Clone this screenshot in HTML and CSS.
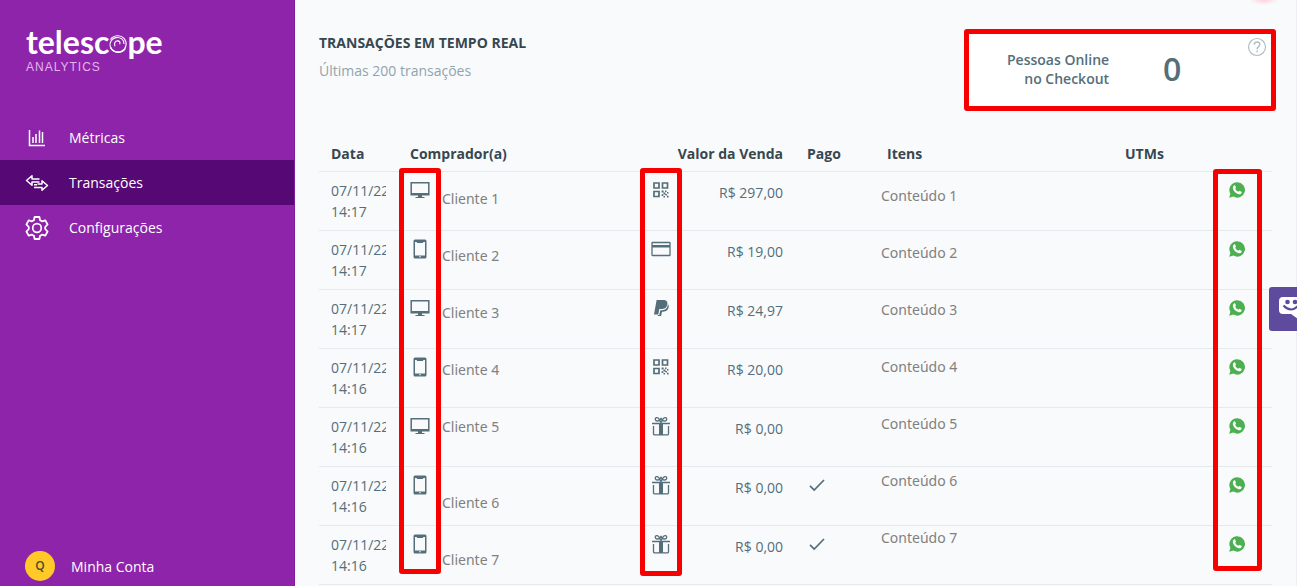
FILE: index.html
```html
<!DOCTYPE html>
<html lang="pt-BR">
<head>
<meta charset="utf-8">
<title>Telescope Analytics - Transações</title>
<meta name="viewport" content="width=device-width, initial-scale=1">
<link rel="stylesheet" href="styles.css">
</head>
<body>
<svg class="sprite" aria-hidden="true">
  <symbol id="desktop" viewBox="0 0 20 20"><path fill="none" stroke="currentColor" stroke-width="1.500" d="M1.200 2.700h17.600v12H1.200z"/><path fill="currentColor" d="M1 13h18v2H1zM8 15h4v2h2.500v1h-9v-1H8z"/></symbol>
  <symbol id="mobile" viewBox="0 0 20 20"><path fill="currentColor" fill-rule="evenodd" d="M5 .5h10q1.500 0 1.500 1.500v16q0 1.500-1.500 1.500H5q-1.500 0-1.500-1.500V2Q3.500.5 5 .5zM5 3v13.500h10V3h-1.500l-.8 1H7.300l-.8-1zM9.200 17.300v1h1.600v-1z"/></symbol>
  <symbol id="qr" viewBox="0 0 20 20"><path fill="none" stroke="currentColor" stroke-width="1.700" d="M3 3h5v5H3zM11.500 3h5v5h-5zM3 11.500h5v5H3z"/><path fill="currentColor" d="M10.600 10.600h2v2h-2zM14 10.600h1.500v1.500H14zM16 12h1.500v1.500H16zM12.500 12.500h2v2h-2zM10.600 14.300h1.700V16h-1.700zM14.500 14h1.500v1.500h-1.500zM12.500 16H14v1.500h-1.500zM16 15.800h1.600v1.600H16z"/></symbol>
  <symbol id="card" viewBox="0 0 20 20"><rect x="1" y="3.500" width="18" height="13" rx=".6" fill="none" stroke="currentColor" stroke-width="1.300"/><path fill="currentColor" d="M1 6h18v2.500H1z"/></symbol>
  <symbol id="paypal" viewBox="0 0 20 20"><path fill="currentColor" d="M5.600 2h6.600c3.200 0 4.700 1.600 4.100 4.500-.6 3-2.600 4.600-5.800 4.600H8.300l-1 5.400H3z"/><path fill="currentColor" d="M17 6.300c.8.9.9 2 .6 3.300-.6 2.800-2.400 4.100-5.200 4.100H11l-.9 4.300H6.800l.2-.9h1.300l1-4.900h2c3.200 0 5.100-2.100 5.700-5.900z"/></symbol>
  <symbol id="gift" viewBox="0 0 20 20"><g fill="none" stroke="currentColor" stroke-width="1.300"><path d="M1 7.500h18M2.500 10v8q0 .8.8.8h13.400q.8 0 .8-.8v-8"/><path d="M10 6.500C8.500 3 7 1.300 5.500 1.600 3.500 2 4 5 6 5c2 0 3.500-1 4-3.200.5 2.200 2 3.200 4 3.200 2 0 2.500-3 .5-3.400C13 1.300 11.500 3 10 6.500z"/></g><path fill="currentColor" d="M8 7h4v12H8z"/></symbol>
  <symbol id="check" viewBox="0 0 20 20"><path fill="none" stroke="currentColor" stroke-width="1.700" d="M3 10.800l4.200 4.200L17 5"/></symbol>
  <symbol id="whatsapp" viewBox="0 0 18 18"><path fill="#4caf50" d="M9.200 1.200a7.700 7.700 0 1 1-3.700 14.400L1.200 16.800l1.200-4.100A7.700 7.700 0 0 1 9.200 1.200z"/><path fill="#fff" d="M6 4.600c.4-.4 1-.4 1.200.1l.7 1.600c.2.5-.2.900-.7 1.400.8 1.600 1.800 2.500 3.300 3.100.6-.8.900-1.100 1.300-.9l1.600.8c.4.2.4.5.2 1-.5 1.300-1.600 1.800-2.900 1.500C7.500 12.400 5.400 10.200 4.900 7.600 4.700 6.400 5.200 5.300 6 4.600z"/></symbol>
</svg>

<div class="app">
  <aside class="sidebar">
    <a class="logo" href="#" aria-label="Telescope Analytics">
      <span class="logo-name"><span>telesc</span><svg class="logo-o" viewBox="0 0 20 20"><path fill="none" stroke="#fff" stroke-width="1.100" d="M2.500 5.500C5.500 1 12.500.5 16 4.300c3.600 4 2.500 10.500-2.300 12.900-4.600 2.200-10.200.1-11.500-4.800C1.200 8 4 4.300 8 3.600c4.500-.8 8.300 2.200 8 6.400"/><path fill="none" stroke="#fff" stroke-width="1.600" d="M2.600 13.500c2.600 5.500 10.600 6.500 14.600 1"/><path fill="none" stroke="#fff" stroke-width="1.100" d="M7 12.300c-1.200-2.800 0-5.300 2.600-5.500 2.200 0 3.200 2 1.900 3.400M9.500 6.800l2.500 1.200"/></svg><span>pe</span></span>
      <span class="logo-sub">ANALYTICS</span>
    </a>
    <nav class="menu">
      <a href="#"><svg class="menu-icon" viewBox="0 0 24 24"><path d="M4.500 4v15.500H20M8 17v-6M11 17V8M14.500 17V4.500M17.500 17V6" stroke-width="1.500"/></svg>Métricas</a>
      <a href="#" class="active" aria-current="page"><svg class="menu-icon" viewBox="0 0 24 24"><path d="M14.500 8H7V4.800L1.500 9.500 7 14.200V11h7.500M9 16.500h8v2.700l5.500-4.700L17 9.800V13h-4.500M9 13.800h3" stroke-width="1.500" stroke-linejoin="round"/></svg>Transações</a>
      <a href="#"><svg class="menu-icon" viewBox="0 0 24 24"><circle cx="12" cy="12" r="4.300" stroke-width="1.700"/><path d="M9.600 1h4.800l.7 3.200 1.900 1.100 3.200-1 2.400 4.100L20.200 11v2l2.400 2.600-2.400 4.100-3.200-1-1.900 1.100-.7 3.200H9.600l-.7-3.200L7 18.700l-3.200 1-2.400-4.100L3.800 13v-2L1.400 8.400l2.400-4.100 3.200 1 1.900-1.100z" stroke-width="1.800" stroke-linejoin="round"/></svg>Configurações</a>
    </nav>
    <a class="account" href="#"><span class="avatar">Q</span>Minha Conta</a>
  </aside>

  <main class="main">
    <header class="page-head">
      <div>
        <h1>TRANSAÇÕES EM TEMPO REAL</h1>
        <p class="subtitle">Últimas 200 transações</p>
      </div>
      <section class="stat">
        <p class="stat-label">Pessoas Online<br>no Checkout</p>
        <strong class="stat-value">0</strong>
        <button class="help" type="button" aria-label="Ajuda"><svg viewBox="0 0 20 20"><circle cx="10" cy="10" r="8.500" stroke-width="1.200"/><path d="M7.300 7.700c0-3.600 5.600-3.500 5.500-.2 0 2.200-2.700 2.100-2.700 4.700M10.100 13.600v1.700" stroke-width="1.500"/></svg></button>
      </section>
    </header>

    <div class="table-area">
      <table>
        <colgroup><col class="c-date"><col class="c-device"><col class="c-buyer"><col class="c-method"><col class="c-value"><col class="c-paid"><col><col class="c-utm"><col class="c-contact"></colgroup>
        <thead>
          <tr><th>Data</th><th colspan="2">Comprador(a)</th><th colspan="2" class="num">Valor da Venda</th><th>Pago</th><th>Itens</th><th>UTMs</th><th></th></tr>
        </thead>
        <tbody>
          <tr><td><div class="date">07/11/22 14:17</div></td><td><svg class="icon"><use href="#desktop"/></svg></td><td></td><td><svg class="icon"><use href="#qr"/></svg></td><td class="num">R$ 297,00</td><td></td><td></td><td></td><td class="contact"><a href="#" aria-label="WhatsApp"><svg><use href="#whatsapp"/></svg></a></td></tr>
          <tr><td><div class="date">07/11/22 14:17</div></td><td><svg class="icon"><use href="#mobile"/></svg></td><td></td><td><svg class="icon"><use href="#card"/></svg></td><td class="num">R$ 19,00</td><td></td><td></td><td></td><td class="contact"><a href="#" aria-label="WhatsApp"><svg><use href="#whatsapp"/></svg></a></td></tr>
          <tr><td><div class="date">07/11/22 14:17</div></td><td><svg class="icon"><use href="#desktop"/></svg></td><td></td><td><svg class="icon"><use href="#paypal"/></svg></td><td class="num">R$ 24,97</td><td></td><td></td><td></td><td class="contact"><a href="#" aria-label="WhatsApp"><svg><use href="#whatsapp"/></svg></a></td></tr>
          <tr><td><div class="date">07/11/22 14:16</div></td><td><svg class="icon"><use href="#mobile"/></svg></td><td></td><td><svg class="icon"><use href="#qr"/></svg></td><td class="num">R$ 20,00</td><td></td><td></td><td></td><td class="contact"><a href="#" aria-label="WhatsApp"><svg><use href="#whatsapp"/></svg></a></td></tr>
          <tr><td><div class="date">07/11/22 14:16</div></td><td><svg class="icon"><use href="#desktop"/></svg></td><td></td><td><svg class="icon"><use href="#gift"/></svg></td><td class="num">R$ 0,00</td><td></td><td></td><td></td><td class="contact"><a href="#" aria-label="WhatsApp"><svg><use href="#whatsapp"/></svg></a></td></tr>
          <tr><td><div class="date">07/11/22 14:16</div></td><td><svg class="icon"><use href="#mobile"/></svg></td><td></td><td><svg class="icon"><use href="#gift"/></svg></td><td class="num">R$ 0,00</td><td><svg class="icon"><use href="#check"/></svg></td><td></td><td></td><td class="contact"><a href="#" aria-label="WhatsApp"><svg><use href="#whatsapp"/></svg></a></td></tr>
          <tr><td><div class="date">07/11/22 14:16</div></td><td><svg class="icon"><use href="#mobile"/></svg></td><td></td><td><svg class="icon"><use href="#gift"/></svg></td><td class="num">R$ 0,00</td><td><svg class="icon"><use href="#check"/></svg></td><td></td><td></td><td class="contact"><a href="#" aria-label="WhatsApp"><svg><use href="#whatsapp"/></svg></a></td></tr>
        </tbody>
      </table>

      <!-- Annotation layer: labels and highlight frames over the table -->
      <ul class="notes notes-buyers"><li>Cliente 1</li><li>Cliente 2</li><li>Cliente 3</li><li>Cliente 4</li><li>Cliente 5</li><li class="after-break">Cliente 6</li><li>Cliente 7</li></ul>
      <ul class="notes notes-items"><li>Conteúdo 1</li><li>Conteúdo 2</li><li>Conteúdo 3</li><li>Conteúdo 4</li><li>Conteúdo 5</li><li>Conteúdo 6</li><li>Conteúdo 7</li></ul>
      <div class="frame frame-device"></div>
      <div class="frame frame-method"></div>
      <div class="frame frame-contact"></div>
    </div>
  </main>
</div>
<div class="glow"></div>
<button class="chat" type="button" aria-label="Chat"><svg viewBox="0 0 28 26"><path fill="#fff" d="M4 1h20q4 0 4 4v9q0 4-4 4h-5v5l-7-5H4q-4 0-4-4V5q0-4 4-4z"/><circle cx="8.500" cy="6" r="2.300" fill="#5e4b9e"/><circle cx="16" cy="6" r="2.300" fill="#5e4b9e"/><path d="M4.500 9.500q7.500 8 15 0" fill="none" stroke="#5e4b9e" stroke-width="2.200"/></svg></button>
</body>
</html>
```
FILE: styles.css
```css
* { box-sizing: border-box; }
body {
  margin: 0;
  font: 14px/21px "Open Sans", sans-serif;
  color: #546e7a;
  background: #f9fafc;
}
h1, p, ul { margin: 0; padding: 0; }
a { color: inherit; text-decoration: none; }
button { padding: 0; border: 0; background: none; cursor: pointer; }
svg { display: block; }
.sprite { position: absolute; width: 0; height: 0; }

.app { display: flex; min-height: 100vh; }

.sidebar {
  flex: 0 0 295px;
  display: flex;
  flex-direction: column;
  padding-top: 24px;
  background: #8e24aa;
  border-right: 1px solid #7d1d9a;
  color: #fff;
}
.logo { display: flex; flex-direction: column; margin: 0 26px 41px; }
.logo-name { display: flex; align-items: center; font: 700 32px/36px Lato, sans-serif; }
.logo-o { width: 20px; height: 20px; margin: 4px -1px 0; }
.logo-sub { font: 400 12px/14px "Liberation Sans", sans-serif; letter-spacing: 1px; color: #e3b5ee; }
.menu a { display: flex; align-items: center; gap: 20px; height: 45px; padding: 0 25px; }
.menu .active { background: #560874; }
.menu-icon { width: 24px; height: 24px; fill: none; stroke: #fff; }
.account { display: flex; align-items: center; gap: 16px; margin-top: auto; padding: 0 25px 5px; }
.avatar {
  width: 30px;
  border-radius: 50%;
  background: #ffca28;
  color: #4e4a2c;
  font-size: 12px;
  font-weight: 600;
  line-height: 30px;
  text-align: center;
}

.main { flex: 1; min-width: 0; padding: 29px 24px 0; border-right: 1px solid #eceff3; }
.page-head { display: flex; justify-content: space-between; margin-bottom: 29px; }
h1 { font-size: 14px; font-weight: 700; line-height: 28px; color: #37474f; }
.subtitle { line-height: 28px; color: #90a4ae; }
.stat {
  position: relative;
  display: flex;
  align-items: center;
  gap: 54px;
  width: 304px;
  height: 74px;
  margin-top: 4px;
  padding: 0 0 2px 39px;
  background: #fff;
}
.stat::after {
  content: "";
  position: absolute;
  inset: -4px;
  border: 5px solid #f80000;
  border-radius: 3px;
  pointer-events: none;
}
.stat-label { font-weight: 600; line-height: 19px; text-align: right; }
.stat-value { font-size: 32px; font-weight: 600; line-height: 40px; }
.help { position: absolute; top: 4px; right: 5px; }
.help svg { width: 20px; height: 20px; fill: none; stroke: #b0bec5; }

.table-area { position: relative; }
table { width: 100%; table-layout: fixed; border-collapse: separate; border-spacing: 0; }
th, td { border-bottom: 1px solid #e6eaed; text-align: left; vertical-align: top; }
th { padding: 7px 12px; height: 36px; font-weight: 700; color: #37474f; white-space: nowrap; }
td { padding: 8px 12px; height: 59px; }
th.num, td.num { text-align: right; white-space: nowrap; }
td.num { line-height: 26px; }
.date { overflow: hidden; }
.c-date { width: 79px; }
.c-device { width: 44px; }
.c-buyer { width: 197px; }
.c-method { width: 44px; }
.c-value { width: 112px; }
.c-paid { width: 80px; }
.c-utm { width: 105px; }
.c-contact { width: 54px; }
.icon { width: 20px; height: 20px; }
.contact { padding: 9px 10px; }
.contact svg { width: 18px; height: 18px; }

.notes {
  position: absolute;
  display: flex;
  flex-direction: column;
  gap: 38px;
  list-style: none;
  font: 14px/19px "Noto Sans", sans-serif;
  color: #808080;
}
.notes-buyers { top: 53px; left: 123px; }
.notes-items { top: 50px; left: 562px; }
.after-break { margin-top: 19px; }

.frame { position: absolute; border: 5px solid #f80000; border-radius: 3px; pointer-events: none; }
.frame-device { top: 32px; left: 80px; width: 42px; height: 406px; }
.frame-method { top: 32px; left: 321px; width: 42px; height: 408px; }
.frame-contact { top: 33px; right: 10px; width: 49px; height: 402px; }

.glow {
  position: absolute;
  top: 0;
  right: 18px;
  width: 30px;
  height: 5px;
  background: radial-gradient(ellipse at top, #fbd3d8, transparent 70%);
}
.chat {
  position: fixed;
  top: 287px;
  right: 0;
  width: 28px;
  height: 44px;
  padding-left: 10px;
  overflow: hidden;
  border-radius: 3px 0 0 3px;
  background: #5e4b9e;
}
.chat svg { width: 28px; height: 26px; }
```
